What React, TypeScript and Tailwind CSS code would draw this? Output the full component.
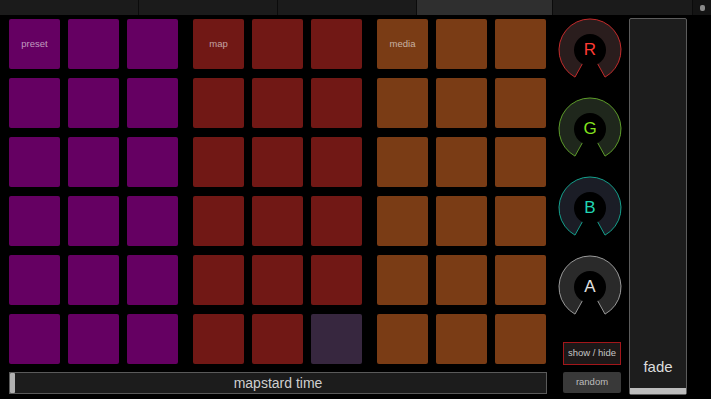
const font = { fontFamily: '"Liberation Sans", Arial, sans-serif' };

const PURPLE = 'bg-[#650062]';
const RED = 'bg-[#711815]';
const ORANGE = 'bg-[#7a3c15]';

type Knob = { label: string; stroke: string; fill: string; text: string };

const knobs: Knob[] = [
  { label: 'R', stroke: '#c42b2b', fill: '#2a1d1d', text: '#ff3a33' },
  { label: 'G', stroke: '#5d9c2a', fill: '#1f271c', text: '#83e21e' },
  { label: 'B', stroke: '#14a08c', fill: '#1b1d26', text: '#21d6b4' },
  { label: 'A', stroke: '#9a9a9a', fill: '#2a2a2a', text: '#e0e0e0' },
];

const Pad = ({ color, label }: { color: string; label?: string }) => (
  <div className={`w-[51px] h-[50px] rounded-[2px] ${color} flex items-center justify-center`}>
    {label && <span className="text-[9.5px] text-white/60">{label}</span>}
  </div>
);

const Group = ({ color, label, lastOdd }: { color: string; label: string; lastOdd?: boolean }) => (
  <div className="grid grid-cols-[51px_51px_51px] gap-x-[8px] gap-y-[9px]">
    {Array.from({ length: 18 }).map((_, i) => (
      <Pad
        key={i}
        color={lastOdd && i === 17 ? 'bg-[#37273f]' : color}
        label={i === 0 ? label : undefined}
      />
    ))}
  </div>
);

const KnobView = ({ k }: { k: Knob }) => (
  <div className="relative w-[64px] h-[64px]">
    <svg width="64" height="64" viewBox="0 0 64 64" className="absolute inset-0">
      <path
        d="M32 32 L47.03 59.11 A31 31 0 1 0 16.97 59.11 Z"
        fill={k.fill}
        stroke={k.stroke}
        strokeWidth="1"
      />
      <circle cx="32" cy="32" r="16" fill="#000" />
    </svg>
    <span
      className="absolute inset-0 flex items-center justify-center text-[17px]"
      style={{ color: k.text }}
    >
      {k.label}
    </span>
  </div>
);

export default function App() {
  const tabs = [0, 1, 2, 3, 4];
  return (
    <div className="w-[711px] h-[399px] bg-black overflow-hidden flex flex-col" style={font}>
      <div className="h-[15px] flex bg-[#141414]">
        {tabs.map((t) => (
          <div
            key={t}
            className={`h-full border-r border-[#0b0b0b] ${t === 3 ? 'w-[136px] bg-[#2f2f2f]' : t === 4 ? 'w-[140px] bg-[#1b1b1b]' : 'w-[139px] bg-[#1b1b1b]'}`}
          />
        ))}
        <div className="flex-1 bg-[#141414] flex justify-center pt-[5px]">
          <div className="w-[5px] h-[6px] rounded-[2px] bg-[#8a8a8a]" />
        </div>
      </div>

      <div className="flex pt-[3px] pl-[9px]">
        <div className="w-[538px] flex flex-col pt-[1px]">
          <div className="flex gap-[15px]">
            <Group color={PURPLE} label="preset" />
            <Group color={RED} label="map" lastOdd />
            <Group color={ORANGE} label="media" />
          </div>
          <div className="mt-[8px] h-[22px] border border-[#5a5a5a] bg-[#1c1c1c] flex items-center relative">
            <div className="absolute left-0 top-0 bottom-0 w-[5px] bg-[#b0b0b0] rounded-[1px]" />
            <span className="flex-1 text-center text-[14px] text-[#cfcfcf]">mapstard time</span>
          </div>
        </div>

        <div className="ml-[11px] w-[64px] flex flex-col">
          <div className="flex flex-col gap-[15px]">
            {knobs.map((k) => (
              <KnobView key={k.label} k={k} />
            ))}
          </div>
          <div className="mt-[23px] ml-[5px] w-[58px] h-[23px] border border-[#a3161a] bg-[#1d1818] flex items-center justify-center text-[9.5px] text-[#c4c4c4]">
            show / hide
          </div>
          <div className="mt-[7px] ml-[5px] w-[58px] h-[21px] rounded-[2px] bg-[#393939] flex items-center justify-center text-[9.5px] text-[#bdbdbd]">
            random
          </div>
        </div>

        <div className="ml-[7px] w-[58px] h-[377px] border border-[#5c5c5c] rounded-[2px] bg-[#1d1d1d] flex flex-col">
          <div className="flex-1" />
          <div className="text-center text-[15px] text-[#dcdcdc] pb-[10px]">fade</div>
          <div className="h-[6px] bg-[#bcbcbc]" />
        </div>
      </div>
    </div>
  );
}
